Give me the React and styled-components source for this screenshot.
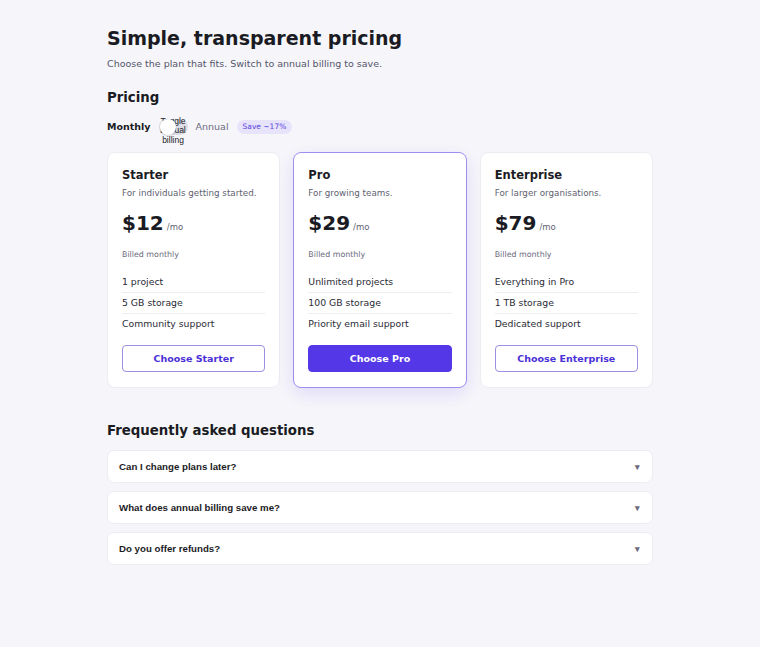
import styled, { createGlobalStyle } from 'styled-components'

const GlobalStyle = createGlobalStyle`
  body {
    margin: 0;
    background: #f6f6fa;
    font-family: "DejaVu Sans", sans-serif;
    color: #1b1b24;
  }
`

const Page = styled.main`
  width: 546px;
  margin: 0 auto;
  padding: 26px 0 40px;
`

const Title = styled.h1`
  margin: 0;
  font-size: 19px;
  font-weight: 700;
  line-height: 24px;
`

const Lead = styled.p`
  margin: 7px 0 0;
  font-size: 9.5px;
  line-height: 13px;
  color: #55556a;
`

const SectionTitle = styled.h2`
  margin: ${(p) => p.$top || 0}px 0 0;
  font-size: 13.3px;
  font-weight: 700;
  line-height: 18px;
`

const BillingRow = styled.div`
  display: flex;
  align-items: center;
  gap: 8px;
  margin-top: 12px;
  height: 16px;
`

const BillingLabel = styled.span`
  font-size: 9.5px;
  line-height: 16px;
  font-weight: ${(p) => (p.$active ? 700 : 400)};
  color: ${(p) => (p.$active ? '#1b1b24' : '#6b6b7e')};
`

const Switch = styled.button`
  position: relative;
  flex: none;
  width: 29px;
  height: 16px;
  padding: 0;
  border: none;
  border-radius: 8px;
  background: #dcdce6;
  font-family: "Liberation Sans", Arial, sans-serif;
  font-size: 8.5px;
  color: #1b1b24;
  cursor: pointer;
  overflow: visible;
`

const SwitchText = styled.span`
  position: absolute;
  z-index: 0;
  left: 0;
  top: -1.5px;
  width: 29px;
  line-height: 9.3px;
  text-align: center;
`

const Knob = styled.span`
  position: absolute;
  z-index: 1;
  left: 1px;
  top: 0.5px;
  width: 16px;
  height: 16px;
  border-radius: 50%;
  background: #fff;
  box-shadow: 0 1px 2px rgba(0, 0, 0, 0.12);
`

const SaveBadge = styled.span`
  padding: 2px 6px;
  border-radius: 9px;
  background: #e7e3fb;
  color: #5a3fe0;
  font-size: 7.5px;
  line-height: 10px;
`

const Cards = styled.div`
  display: grid;
  grid-template-columns: repeat(3, 1fr);
  gap: 13px;
  margin-top: 17px;
`

const Card = styled.section`
  display: flex;
  flex-direction: column;
  padding: 15px 14px 15px;
  background: #fff;
  border-radius: 8px;
  border: 1px solid ${(p) => (p.$featured ? '#9d8ff0' : '#ececf2')};
  box-shadow: ${(p) =>
    p.$featured ? '0 6px 18px rgba(84, 56, 232, 0.14)' : 'none'};
`

const PlanName = styled.h3`
  margin: 0;
  font-size: 11.5px;
  font-weight: 700;
  line-height: 14px;
`

const PlanDesc = styled.p`
  margin: 5px 0 0;
  font-size: 8.75px;
  line-height: 12px;
  color: #5f5f72;
`

const PriceRow = styled.div`
  display: flex;
  align-items: baseline;
  gap: 3px;
  margin-top: 11px;
`

const Price = styled.span`
  font-size: 20px;
  font-weight: 700;
  line-height: 26px;
`

const Per = styled.span`
  font-size: 8.5px;
  color: #5f5f72;
`

const Billed = styled.p`
  margin: 13px 0 0;
  font-size: 7.9px;
  line-height: 11px;
  color: #6b6b7e;
`

const Features = styled.ul`
  list-style: none;
  margin: 12.5px 0 0;
  padding: 0;
`

const Feature = styled.li`
  font-size: 9.3px;
  line-height: 20px;
  color: #2a2a36;
  border-top: ${(p) => (p.$first ? 'none' : '1px solid #ededf2')};
`

const ChooseButton = styled.button`
  margin-top: 11px;
  height: 27px;
  border-radius: 4px;
  font-family: "DejaVu Sans", sans-serif;
  font-size: 9.5px;
  font-weight: 700;
  cursor: pointer;
  border: 1px solid ${(p) => (p.$primary ? '#5438e8' : '#9a8fe0')};
  background: ${(p) => (p.$primary ? '#5438e8' : '#fff')};
  color: ${(p) => (p.$primary ? '#fff' : '#4a30d6')};
`

const FaqList = styled.div`
  display: flex;
  flex-direction: column;
  gap: 8px;
  margin-top: 10px;
`

const FaqItem = styled.button`
  display: flex;
  align-items: center;
  justify-content: space-between;
  height: 33px;
  padding: 0 12px 0 11px;
  background: #fff;
  border: 1px solid #ececf2;
  border-radius: 7px;
  font-family: "Liberation Sans", Arial, sans-serif;
  font-size: 9.7px;
  font-weight: 700;
  color: #1b1b24;
  text-align: left;
  cursor: pointer;
`

const Caret = styled.span`
  font-size: 9px;
  color: #6b6b7e;
`

const plans = [
  {
    name: 'Starter',
    desc: 'For individuals getting started.',
    price: 12,
    features: ['1 project', '5 GB storage', 'Community support'],
  },
  {
    name: 'Pro',
    desc: 'For growing teams.',
    price: 29,
    features: ['Unlimited projects', '100 GB storage', 'Priority email support'],
    featured: true,
  },
  {
    name: 'Enterprise',
    desc: 'For larger organisations.',
    price: 79,
    features: ['Everything in Pro', '1 TB storage', 'Dedicated support'],
  },
]

const faqs = [
  'Can I change plans later?',
  'What does annual billing save me?',
  'Do you offer refunds?',
]

const App = () => {
  return (
    <Page>
      <GlobalStyle />
      <Title>Simple, transparent pricing</Title>
      <Lead>Choose the plan that fits. Switch to annual billing to save.</Lead>

      <SectionTitle $top={18.5}>Pricing</SectionTitle>
      <BillingRow>
        <BillingLabel $active>Monthly</BillingLabel>
        <Switch aria-pressed="false">
          <SwitchText>Toggle annual billing</SwitchText>
          <Knob />
        </Switch>
        <BillingLabel>Annual</BillingLabel>
        <SaveBadge>Save ~17%</SaveBadge>
      </BillingRow>

      <Cards>
        {plans.map((plan) => (
          <Card key={plan.name} $featured={plan.featured}>
            <PlanName>{plan.name}</PlanName>
            <PlanDesc>{plan.desc}</PlanDesc>
            <PriceRow>
              <Price>${plan.price}</Price>
              <Per>/mo</Per>
            </PriceRow>
            <Billed>Billed monthly</Billed>
            <Features>
              {plan.features.map((f, i) => (
                <Feature key={f} $first={i === 0}>
                  {f}
                </Feature>
              ))}
            </Features>
            <ChooseButton $primary={plan.featured}>
              Choose {plan.name}
            </ChooseButton>
          </Card>
        ))}
      </Cards>

      <SectionTitle $top={34}>Frequently asked questions</SectionTitle>
      <FaqList>
        {faqs.map((q) => (
          <FaqItem key={q}>
            {q}
            <Caret>▾</Caret>
          </FaqItem>
        ))}
      </FaqList>
    </Page>
  )
}

export default App
